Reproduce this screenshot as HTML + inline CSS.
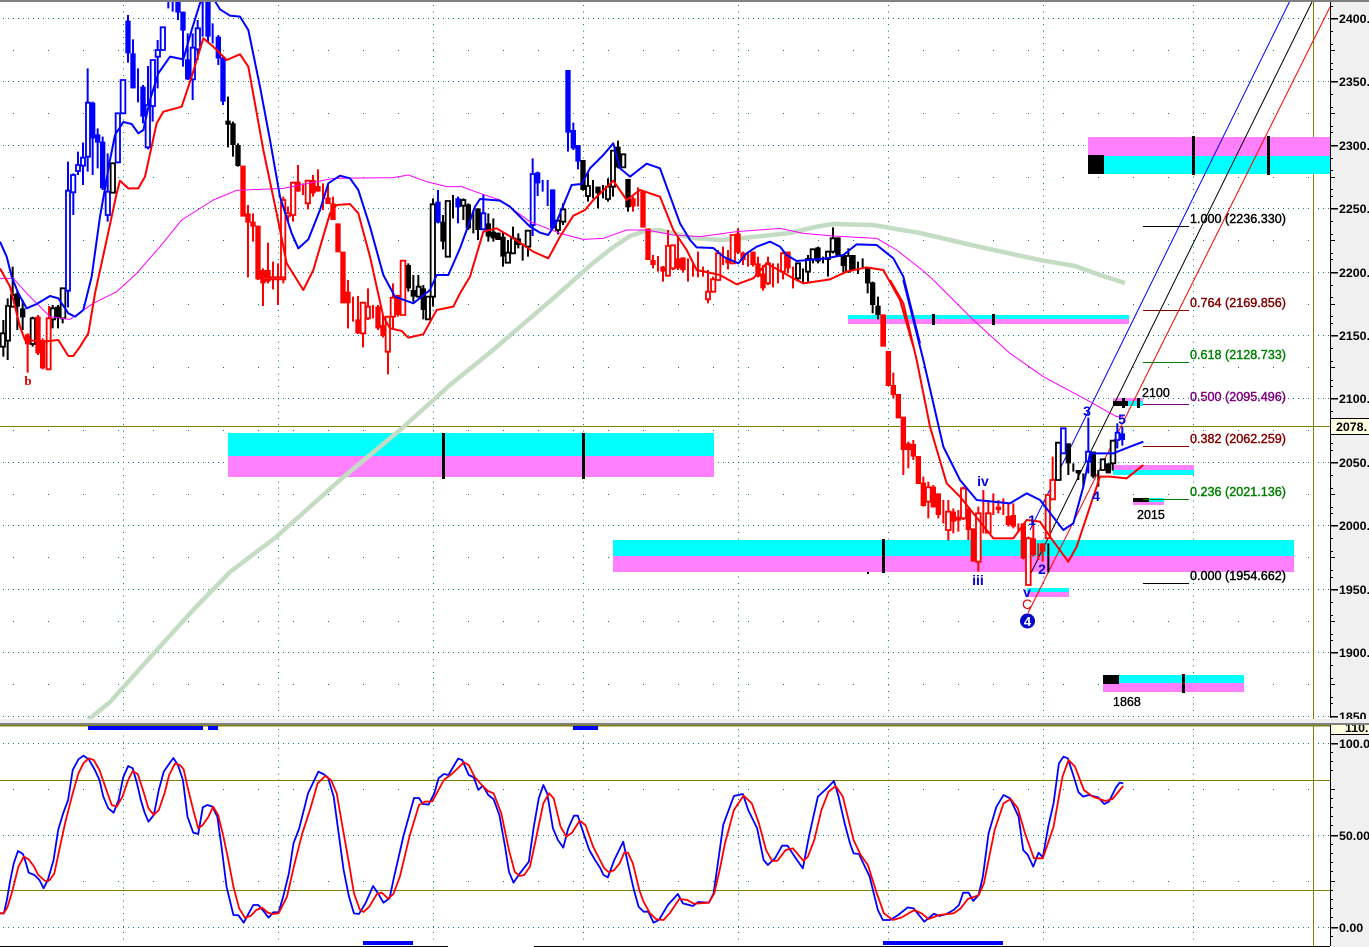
<!DOCTYPE html>
<html><head><meta charset="utf-8"><title>Chart</title>
<style>
html,body{margin:0;padding:0;background:#fff;width:1369px;height:947px;overflow:hidden}
svg{display:block;position:absolute;left:0;top:0}
text{font-family:"Liberation Sans",sans-serif}
.w{fill:none;stroke-width:6}
.f{fill:none;stroke-width:16}
.h{fill:#fff;stroke-width:5.5}
.ax{font-size:12.4px;font-weight:bold;fill:#000}
.fb{font-size:12.6px;stroke-width:.4}
.lb{font-size:12.5px;fill:#000;stroke:#000;stroke-width:.35}
.wv{font-size:14px;font-weight:bold;fill:#0000e0;text-anchor:middle}
</style></head><body>
<svg width="1369" height="947" viewBox="0 0 1369 947" xmlns="http://www.w3.org/2000/svg">
<rect width="1369" height="947" fill="#fff"/>
<!-- grid -->
<g stroke="#008080" stroke-width="1" fill="none" shape-rendering="crispEdges">
<g stroke-dasharray="1 4">
<path d="M3 18.5H1330M3 81.5H1330M3 145.5H1330M3 208.5H1330M3 272.5H1330M3 335.5H1330M3 398.5H1330M3 462.5H1330M3 525.5H1330M3 589.5H1330M3 652.5H1330M3 716.5H1330M3 743.5H1330M3 835.5H1330M3 927.5H1330"/>
</g>
<g stroke-dasharray="1 34">
<path d="M13 50.5H1330M13 113.5H1330M13 177.5H1330M13 240.5H1330M13 304.5H1330M13 367.5H1330M13 430.5H1330M13 494.5H1330M13 557.5H1330M13 621.5H1330M13 684.5H1330M13 789.5H1330M13 881.5H1330"/>
</g>
<g stroke-dasharray="1 5.35">
<path d="M123.5 5V945M278.5 5V945M433.5 5V945M583.5 5V945M738.5 5V945M888.5 5V945M1043.5 5V945M1193.5 5V945"/>
</g>
</g>
<!-- olive lines -->
<g stroke="#808000" stroke-width="1" shape-rendering="crispEdges">
<path d="M0 426.5H1330M1313.5 0V946M0 780.5H1330M0 890.5H1330"/>
<path d="M0 725.5H1330" stroke-width="2"/>
</g>
<!-- bands -->
<g shape-rendering="crispEdges">
<rect x="1088" y="137" width="242" height="19" fill="#ff80ff"/><rect x="1088" y="156" width="242" height="18" fill="#00ffff"/><rect x="1088" y="155" width="16" height="19" fill="#000"/>
<rect x="1192" y="136" width="3" height="39" fill="#000"/><rect x="1267" y="136" width="3" height="39" fill="#000"/>
<rect x="848" y="315" width="281" height="4" fill="#00ffff"/><rect x="848" y="319" width="281" height="5" fill="#ff80ff"/>
<rect x="932" y="314" width="3" height="11" fill="#000"/><rect x="992" y="314" width="3" height="11" fill="#000"/>
<rect x="228" y="433" width="486" height="23" fill="#00ffff"/><rect x="228" y="456" width="486" height="21" fill="#ff80ff"/>
<rect x="442" y="433" width="3" height="46" fill="#000"/><rect x="582" y="433" width="3" height="46" fill="#000"/>
<rect x="613" y="540" width="681" height="16" fill="#00ffff"/><rect x="613" y="556" width="681" height="16" fill="#ff80ff"/>
<rect x="882" y="539" width="3" height="34" fill="#000"/><rect x="867" y="572" width="2" height="2" fill="#000"/>
<rect x="1027" y="588" width="42" height="4" fill="#00ffff"/><rect x="1027" y="592" width="42" height="5" fill="#ff80ff"/>
<rect x="1113" y="398" width="30" height="3" fill="#ff80ff"/><rect x="1113" y="401" width="30" height="5" fill="#00ffff"/><rect x="1113" y="401" width="15" height="5" fill="#000"/>
<rect x="1122" y="398" width="3" height="10" fill="#000"/><rect x="1137" y="398" width="3" height="10" fill="#000"/>
<rect x="1113" y="465" width="81" height="5" fill="#ff80ff"/><rect x="1113" y="470" width="81" height="5" fill="#00ffff"/>
<rect x="1133" y="498" width="31" height="4" fill="#00ffff"/><rect x="1133" y="502" width="31" height="3" fill="#ff80ff"/><rect x="1133" y="498" width="16" height="4" fill="#000"/>
<rect x="1103" y="675" width="141" height="8" fill="#00ffff"/><rect x="1103" y="683" width="141" height="9" fill="#ff80ff"/><rect x="1103" y="675" width="16" height="9" fill="#000"/>
<rect x="1182" y="674" width="3" height="19" fill="#000"/>
</g>
<!-- thick green MA -->
<path d="M88 720L110 702L155 652L195 608L230 572L275 538L340 480L400 430L450 385L493 350L557 295L593 263L612 248L630 236L645 231L660 230L693 238L720 240L743 238L790 233L815 227L833 224L873 225L920 233L980 247L1040 260L1075 266L1100 275L1125 283" fill="none" stroke="#c3dcc3" stroke-width="4.5" stroke-linejoin="round"/>
<!-- channel lines -->
<g fill="none" stroke-width="1">
<path d="M1310 -40L1030 530" stroke="#0000ff"/>
<path d="M1312 2L1030 575" stroke="#000"/>
<path d="M1330 7L1028 613" stroke="#ff0000"/>
</g>
<!-- candles: zoom1 -->
<g transform="scale(.33333)">
<g stroke="#000">
<path class="w" d="M10 960V1070M23 895V1080M38 800V920M52 870V990M68 900V990M98 950V1040M158 915V985M174 915V985M188 865V970M684 290V442M699 365V470M714 430V500M1225 790V875M1240 825V905M1255 825V890M1270 855V958M1299 595V920M1329 645V748M1359 585V655"/>
<path class="f" d="M52 880V920M68 925V952M174 920V955M684 362V374M699 370V435M714 435V498M1225 795V865M1240 870V890M1270 865V930M1329 665V725"/>
<path class="h" d="M2 1000H15V1040H2ZM18 918H30V1022H18ZM33 885H45V920H33ZM92 955H105V1032H92ZM152 925H165V958H152ZM182 865H196V955H182ZM1250 860H1262V890H1250ZM1278 890H1290V958H1278ZM1292 613H1305V890H1292ZM1337 603H1350V770H1337Z"/>
</g>
<g stroke="#ff0000">
<path class="w" d="M83 1000V1118M114 945V1065M128 1015V1108M147 918V1110M744 615V832M759 640V725M774 677V840M789 805V918M804 728V850M819 785V868M834 790V915M850 590V850M864 620V665M879 545V665M894 495V575M909 550V585M924 540V628M939 525V590M954 508V575M969 550V630M984 555V612M999 590V660M1044 840V985M1059 890V965M1074 888V1002M1089 908V1042M1104 865V960M1119 915V955M1134 915V990M1149 945V1012M1164 950V1123M1179 850V985M1194 885V950"/>
<path class="f" d="M83 1003V1033M114 950V1060M128 1020V1105M729 497V650M744 640V668M759 665V680M774 677V838M789 810V850M804 810V845M894 545V575M939 540V580M954 558V575M984 592V612M999 610V660M1014 670V757M1029 755V910M1044 875V910M1074 958V1000M1134 920V985M1149 975V1008M1194 885V945"/>
<path class="h" d="M140 955H152V1108H140ZM785 832H856V838H785ZM843 600H856V832H843ZM858 640H870V648H858ZM873 548H886V645H873ZM917 542H930V610H917ZM1082 908H1096V1000H1082ZM1098 920H1110V955H1098ZM1157 950H1170V1055H1157ZM1172 893H1185V950H1172ZM1202 782H1216V945H1202Z"/>
</g>
<g stroke="#0000ff">
<path class="w" d="M204 485V922M220 520V645M234 455V525M249 428V555M263 205V515M278 305V525M293 385V505M308 410V570M323 460V665M352 340V490M384 45V188M399 118V265M414 205V307M429 255V370M444 198V448M458 180V365M473 120V265M505 0V25M518 0V35M534 0V60M549 35V200M563 100V240M578 100V300M593 60V180M608 0V110M624 0V125M638 70V130M655 105V195M669 170V315M1314 570V670M1374 590V670"/>
<path class="f" d="M278 308V415M293 403V428M308 425V565M384 62V160M399 160V265M429 260V350M534 5V38M549 35V92M563 178V238M624 5V110M655 110V175M669 172V305M1314 605V668M1374 595V622"/>
<path class="h" d="M198 572H210V872H198ZM213 525H226V577H213ZM228 495H240V513H228ZM243 473H255V497H243ZM258 308H270V470H258ZM317 575H330V645H317ZM347 340H360V487H347ZM362 240H376V340H362ZM437 315H450V442H437ZM452 180H465V318H452ZM467 150H480V170H467ZM482 82H495V150H482ZM572 143H585V238H572ZM587 85H600V148H587Z"/>
</g>
<path class="h" stroke="#000" d="M332 490H345V578H332Z"/>
</g>
<!-- candles: zoom2 -->
<g transform="translate(460,50) scale(.33333)">
<g stroke="#000">
<path class="w" d="M10 445V510M25 460V540M40 480V550M54 475V570M85 490V575M100 505V575M114 548V570M129 545V650M144 570V640M159 530V610M175 550V595M188 580V632M204 540V620M294 510V553M309 460V525M369 330V422M384 365V455M399 390V445M414 410V475M429 405V445M444 385V455M459 300V440M474 272V355M504 387V485M1014 640V695M1029 655V700M1044 615V695M1059 595V640M1074 590V640M1089 620V640M1104 602V680M1119 532V610M1134 562V620M1150 612V668M1165 595V668M1179 615V660M1194 635V672M1208 625V655M1223 655V730M1238 695V790M1254 740V808"/>
<path class="f" d="M25 463V535M54 475V540M85 520V560M100 545V565M114 548V570M129 560V620M175 565V585M369 330V420M414 410V430M474 290V352M504 387V472M1074 592V635M1134 562V620M1150 615V648M1179 615V660M1223 655V700M1238 697V765M1254 767V795"/>
<path class="h" d="M4 450H16V467H4ZM137 608H150V638H137ZM153 565H165V610H153ZM197 542H211V590H197ZM288 512H300V540H288ZM302 478H316V515H302ZM378 408H390V438H378ZM438 410H450V447H438ZM453 302H465V410H453ZM484 313H496V352H484ZM1008 640H1020V685H1008ZM1038 627H1050V665H1038ZM1052 598H1065V628H1052ZM1098 605H1110V627H1098ZM1112 565H1125V605H1112ZM1158 618H1170V665H1158Z"/>
</g>
<g stroke="#0000ff">
<path class="w" d="M70 432V540M218 325V558M233 365V438M248 390V425M263 390V468M278 418V537M324 60V305M340 218V300M354 285V358"/>
<path class="f" d="M233 367V400M278 418V535M324 60V248M340 240V295M354 285V335"/>
<path class="h" d="M64 490H76V538H64ZM212 372H224V525H212Z"/>
</g>
<g stroke="#ff0000">
<path class="w" d="M519 440V485M534 412V470M579 615V655M594 618V665M609 648V695M624 540V680M639 585V660M654 560V660M669 622V668M684 625V695M699 640V680M714 605V682M729 650V680M744 660V760M759 680V728M774 600V692M789 590V645M804 600V658M834 535V612M849 605V645M864 610V650M879 605V650M894 620V682M909 645V722M924 620V705M939 640V712M954 640V700M969 605V688M984 605V670M999 650V715"/>
<path class="f" d="M519 445V470M549 425V533M564 535V630M579 630V645M609 650V665M654 625V655M669 622V660M804 625V640M834 550V608M849 608V630M879 605V645M894 640V680M909 670V715M984 605V655M1269 793V890"/>
<path class="h" d="M618 588H630V677H618ZM632 586H645V655H632ZM738 725H750V748H738ZM753 688H766V725H753ZM768 610H781V690H768ZM812 555H825V640H812ZM918 640H930V700H918ZM963 610H975V665H963Z"/>
</g>
</g>
<!-- candles: zoom3 -->
<g transform="translate(860,280) scale(.33333)">
<g stroke="#ff0000">
<path class="w" d="M100 278V355M130 508V585M145 485V565M160 480V540M190 590V680M205 605V715M220 615V683M235 640V715M250 660V730M265 660V782M280 685V760M295 690V755M310 620V720M325 685V780M355 680V875M370 630V760M385 660V760M400 640V705M415 660V700M430 655V705M445 670V740M460 670V745M475 730V755M490 730V838M505 770V915M520 735V830M535 790V840M548 790V845M578 530V660"/>
<path class="f" d="M70 105V200M85 213V318M100 315V345M115 342V415M130 410V510M145 490V510M160 492V530M175 528V612M190 608V678M220 620V682M235 640V705M280 695V725M295 710V722M325 685V750M340 745V845M415 680V690M445 708V735M460 705V740M490 730V835M520 775V825M548 790V815"/>
<path class="h" d="M198 622H212V665H198ZM258 695H272V750H258ZM303 625H318V715H303ZM348 700H362V845H348ZM378 700H392V758H378ZM498 775H512V915H498ZM557 645H570V775H557ZM571 600H585V658H571Z"/>
</g>
<g stroke="#000">
<path class="w" d="M565 790V878M625 490V585M640 550V575M655 570V600M670 580V620M700 515V595M715 570V620M745 550V580M758 480V572"/>
<path class="f" d="M625 490V550M655 570V580M700 515V590M745 550V580"/>
<path class="h" d="M588 488H602V600H588ZM722 538H735V570H722ZM752 482H766V550H752Z"/>
</g>
<g stroke="#0000ff">
<path class="w" d="M685 413V580M772 430V505M787 440V497"/>
<path class="f" d="M787 460V480"/>
<path class="h" d="M603 445H617V520H603ZM678 515H692V545H678ZM767 458H778V480H767Z"/>
</g>
</g>
<!-- MA lines -->
<g fill="none" stroke-linejoin="round">
<g transform="scale(.33333)">
<path stroke="#ff00ff" stroke-width="3" d="M0 835L40 835L80 880L150 950L210 958L280 910L350 875L410 820L480 740L545 660L640 600L710 571L850 565L1000 535L1180 533L1225 525L1280 545L1340 560L1380 560"/>
<path stroke="#0000ff" stroke-width="6" d="M0 725L20 770L35 830L55 880L80 925L110 912L150 888L175 895L205 940L225 950L250 930L275 830L300 650L330 480L345 405L370 366L395 372L415 400L430 390L450 300L475 220L510 170L550 178L575 90L600 10L610 -10M640 -5L660 28L690 47L720 50L745 90L780 260L810 420L840 590L875 700L895 745L925 718L960 630L985 550L1020 527L1050 535L1075 570L1110 680L1150 825L1185 890L1240 910L1290 870L1310 825L1345 825L1380 745"/>
<path stroke="#ff0000" stroke-width="6" d="M0 805L30 860L60 980L75 1020L130 1025L175 1020L205 1068L220 1068L240 1040L265 1000L285 880L320 720L350 580L360 542L385 565L415 565L435 530L470 370L490 335L545 320L575 230L610 115L640 140L680 180L720 163L745 200L790 450L830 640L860 790L910 870L940 810L990 640L1010 615L1050 612L1075 640L1110 770L1150 950L1170 985L1205 993L1225 1013L1270 1003L1310 930L1360 920L1380 880"/>
</g>
<g transform="translate(460,50) scale(.33333)">
<path stroke="#ff00ff" stroke-width="3" d="M0 408L60 430L120 450L210 515L300 550L370 568L430 565L500 540L560 540L640 555L720 560L830 545L960 535L1030 550L1120 558L1250 565L1310 600L1380 655"/>
<path stroke="#0000ff" stroke-width="6" d="M0 595L20 540L45 470L60 447L120 452L150 470L210 530L240 548L265 555L290 515L335 405L365 402L390 355L430 315L460 280L480 355L510 380L560 341L600 355L620 410L660 520L690 570L710 592L760 594L790 620L835 640L860 610L890 590L930 575L960 590L980 615L1010 633L1100 625L1150 615L1190 583L1250 585L1300 625L1330 680L1360 800L1380 880"/>
<path stroke="#ff0000" stroke-width="6" d="M0 730L30 680L70 545L110 535L160 565L220 605L265 625L300 560L340 497L375 480L400 450L460 392L500 450L540 420L600 440L640 540L680 600L710 660L780 675L830 703L880 685L920 640L1000 685L1030 700L1110 688L1160 665L1220 652L1270 660L1320 750L1360 890"/>
</g>
<g transform="translate(860,280) scale(.33333)">
<path stroke="#ff00ff" stroke-width="3" d="M180 -36L220 0L340 120L450 220L550 290L690 365L770 410L790 410"/>
<path stroke="#0000ff" stroke-width="6" d="M130 0L190 240L250 500L300 600L350 660L450 670L500 640L540 660L610 750L640 730L670 620L690 520L760 520L810 500L850 485"/>
<path stroke="#ff0000" stroke-width="6" d="M90 0L130 70L170 240L210 440L260 610L300 650L400 775L460 775L500 720L540 725L570 770L625 845L650 800L690 680L720 590L750 590L800 595L850 555"/>
</g>
</g>
<!-- fib lines -->
<g stroke-width="1" shape-rendering="crispEdges">
<path d="M1143 226.5H1189" stroke="#000"/>
<path d="M1143 310.5H1189" stroke="#800000"/>
<path d="M1143 362.5H1189" stroke="#008000"/>
<path d="M1143 404.5H1189" stroke="#800080"/>
<path d="M1143 446.5H1189" stroke="#800000"/>
<path d="M1143 499.5H1189" stroke="#008000"/>
<path d="M1143 583.5H1189" stroke="#000"/>
</g>
<!-- fib text -->
<g class="fb">
<text x="1190" y="223" class="fb" fill="#000" stroke="#000">1.000 (2236.330)</text>
<text x="1190" y="307" class="fb" fill="#800000" stroke="#800000">0.764 (2169.856)</text>
<text x="1190" y="359" class="fb" fill="#008000" stroke="#008000">0.618 (2128.733)</text>
<text x="1190" y="401" class="fb" fill="#800080" stroke="#800080">0.500 (2095.496)</text>
<text x="1190" y="443" class="fb" fill="#800000" stroke="#800000">0.382 (2062.259)</text>
<text x="1190" y="496" class="fb" fill="#008000" stroke="#008000">0.236 (2021.136)</text>
<text x="1190" y="580" class="fb" fill="#000" stroke="#000">0.000 (1954.662)</text>
</g>
<text x="1142" y="397" class="lb">2100</text>
<text x="1137" y="519" class="lb">2015</text>
<text x="1113" y="706" class="lb">1868</text>
<!-- wave labels -->
<text x="28" y="385" class="wv" style="fill:#e00000;font-size:13px;font-family:'Liberation Serif',serif">b</text>
<text x="978" y="585" class="wv">iii</text>
<text x="983" y="486" class="wv">iv</text>
<text x="1027" y="597" class="wv">v</text>
<text x="1027" y="609" class="wv" style="fill:#e00000;font-weight:normal">C</text>
<text x="1032" y="525" class="wv">1</text>
<text x="1042" y="574" class="wv">2</text>
<text x="1087" y="416" class="wv">3</text>
<text x="1096" y="501" class="wv">4</text>
<text x="1122" y="424" class="wv">5</text>
<circle cx="1027.5" cy="621" r="7.5" fill="#0000c8"/>
<text x="1027.5" y="626" class="wv" style="fill:#fff;font-size:13px">4</text>
<!-- stochastic -->
<g fill="none" stroke-linejoin="round">
<g transform="translate(0,700) scale(.38265,.33333)">
<path vector-effect="non-scaling-stroke" stroke="#0000ff" stroke-width="1.8" d="M0 640L10 640L18 600L27 540L36 490L47 453L60 462L68 490L75 518L90 525L103 540L114 565L125 540L140 480L152 390L165 340L178 300L190 210L205 178L218 167L232 178L248 210L260 240L270 290L283 325L297 338L310 300L322 232L335 198L347 205L358 250L368 300L378 338L388 365L402 345L415 270L428 215L440 195L453 174L465 195L478 240L490 350L505 398L518 402L530 322L542 315L555 320L568 350L580 450L592 560L610 645L623 646L637 668L650 640L662 615L675 615L690 635L702 653L714 637L728 637L740 590L755 520L767 430L782 385L805 280L832 215L845 222L857 232L872 290L885 400L898 510L912 590L925 640L938 642L955 610L975 558L988 580L1002 608L1018 595L1030 530L1055 405L1082 294L1095 294L1105 312L1120 314L1135 280L1146 235L1160 222L1172 225L1197 176L1208 180L1225 225L1238 232L1250 270L1262 257L1276 285L1290 298L1305 345L1320 440L1330 515L1342 548L1360 518L1382 485L1395 380L1408 295L1420 255L1430 280L1445 385L1458 420L1472 443L1485 385L1500 347L1510 347L1525 400L1540 450L1555 480L1568 503"/>
<path vector-effect="non-scaling-stroke" stroke="#ff0000" stroke-width="1.8" d="M0 640L10 640L20 620L33 570L48 500L62 470L75 478L88 498L100 525L118 543L130 540L142 520L155 450L170 370L190 280L205 220L218 190L232 175L245 180L260 210L275 260L292 315L305 320L320 290L335 240L347 213L360 222L375 275L388 325L402 345L415 330L430 280L442 225L457 191L470 195L480 208L490 260L505 330L518 385L530 375L545 350L557 320L570 345L582 400L595 470L610 560L625 625L640 653L655 648L670 630L685 623L700 638L712 642L728 640L750 590L770 490L790 400L810 330L830 250L850 228L865 240L880 280L895 380L912 490L925 580L940 628L950 636L965 620L985 582L998 578L1014 596L1028 582L1045 530L1070 410L1095 315L1110 305L1130 304L1160 240L1185 218L1212 187L1225 195L1240 230L1255 250L1275 273L1290 280L1310 340L1330 450L1345 515L1358 528L1370 525L1385 500L1400 420L1420 310L1435 280L1447 295L1465 380L1480 410L1495 398L1515 362L1530 375L1550 440L1568 480"/>
</g>
<g transform="translate(600,700) scale(.35714,.33333)">
<path vector-effect="non-scaling-stroke" stroke="#0000ff" stroke-width="1.8" d="M0 503L10 525L22 532L40 480L65 425L80 500L95 570L108 620L122 635L135 635L150 668L165 660L190 615L218 582L232 610L260 618L275 606L305 608L318 580L330 490L345 375L375 288L400 282L415 330L440 385L458 480L470 495L490 475L510 437L525 437L545 470L568 505L585 410L610 290L635 265L655 243L668 290L685 370L700 430L710 460L725 462L755 530L778 630L792 660L812 660L835 645L862 622L878 625L908 665L935 641L950 648L970 642L990 630L1005 615L1017 578L1032 578L1045 603L1060 585L1072 530L1088 400L1110 320L1130 285L1148 295L1172 350L1185 450L1198 465L1213 500L1228 458L1240 472L1255 380L1270 310L1285 190L1298 170L1310 175L1325 225L1340 277L1353 290L1368 285L1395 292L1412 312L1425 305L1445 262L1455 248L1465 250"/>
<path vector-effect="non-scaling-stroke" stroke="#ff0000" stroke-width="1.8" d="M0 480L12 505L25 517L40 510L55 490L68 458L78 458L92 490L110 570L122 605L140 640L158 658L178 660L195 640L222 597L245 600L262 611L305 608L320 580L335 510L350 430L375 330L402 287L425 310L445 370L465 450L482 483L497 482L520 450L540 445L570 483L582 470L600 420L620 330L640 275L660 258L680 290L710 420L730 465L750 495L775 580L795 640L820 660L845 652L880 630L900 640L920 657L950 645L990 640L1010 625L1030 597L1060 586L1075 550L1105 390L1130 310L1150 297L1170 325L1190 400L1215 475L1240 475L1270 380L1295 230L1312 180L1330 200L1355 270L1380 290L1415 303L1435 297L1465 258"/>
</g>
</g>
<!-- blue bars -->
<g fill="#0000ff" shape-rendering="crispEdges">
<rect x="88" y="726" width="115" height="4"/><rect x="208" y="726" width="10" height="4"/><rect x="573" y="726" width="25" height="4"/>
<rect x="363" y="941" width="50" height="4"/><rect x="883" y="941" width="120" height="4"/>
</g>
<!-- right axis panel -->
<rect x="1331" y="0" width="38" height="947" fill="#f0f0f0"/>
<g shape-rendering="crispEdges">
<rect x="1331" y="419" width="38" height="16" fill="#ffffe1"/>
<path d="M1331 418.5H1369M1331 434.5H1369" stroke="#000" stroke-width="1"/>
<rect x="1331" y="725" width="38" height="9" fill="#ffffe1"/>
<path d="M1331 734.5H1369" stroke="#000"/>
<path d="M1330.5 0V718M1330.5 725V946M0 946.5H448M534 946.5H1330" stroke="#000" stroke-width="1"/>
<path d="M1331 18.5h7M1331 81.5h7M1331 145.5h7M1331 208.5h7M1331 272.5h7M1331 335.5h7M1331 398.5h7M1331 462.5h7M1331 525.5h7M1331 589.5h7M1331 652.5h7M1331 716.5h7M1331 743.5h7M1331 835.5h7M1331 927.5h7" stroke="#000" stroke-width="1.5"/>
<path d="M1331 50.5h4M1331 113.5h4M1331 177.5h4M1331 240.5h4M1331 304.5h4M1331 367.5h4M1331 494.5h4M1331 557.5h4M1331 621.5h4M1331 684.5h4M1331 789.5h4M1331 881.5h4" stroke="#000"/>
<path d="M1332 6v1M1332 31v1M1332 44v1M1332 63v1M1332 69v1M1332 94v1M1332 107v1M1332 126v1M1332 132v1M1332 158v1M1332 170v1M1332 189v1M1332 196v1M1332 221v1M1332 234v1M1332 253v1M1332 259v1M1332 285v1M1332 297v1M1332 316v1M1332 323v1M1332 348v1M1332 361v1M1332 380v1M1332 386v1M1332 411v1M1332 443v1M1332 450v1M1332 475v1M1332 488v1M1332 507v1M1332 513v1M1332 538v1M1332 551v1M1332 570v1M1332 577v1M1332 602v1M1332 615v1M1332 634v1M1332 640v1M1332 665v1M1332 678v1M1332 697v1M1332 703v1M1332 752v1M1332 761v1M1332 770v1M1332 798v1M1332 807v1M1332 816v1M1332 825v1M1332 844v1M1332 853v1M1332 862v1M1332 871v1M1332 890v1M1332 899v1M1332 908v1M1332 917v1M1332 936v1" stroke="#000" stroke-width="2"/>
</g>
<g>
<text x="1339" y="23" class="ax">2400.</text>
<text x="1339" y="86" class="ax">2350.</text>
<text x="1339" y="150" class="ax">2300.</text>
<text x="1339" y="213" class="ax">2250.</text>
<text x="1339" y="277" class="ax">2200.</text>
<text x="1339" y="340" class="ax">2150.</text>
<text x="1339" y="403" class="ax">2100.</text>
<text x="1336" y="431" class="ax">2078.</text>
<text x="1339" y="467" class="ax">2050.</text>
<text x="1339" y="530" class="ax">2000.</text>
<text x="1339" y="594" class="ax">1950.</text>
<text x="1339" y="657" class="ax">1900.</text>
<text x="1339" y="721" class="ax">1850.</text>
<text x="1345" y="732" class="ax">110.</text>
<text x="1339" y="748" class="ax">100.0</text>
<text x="1339" y="840" class="ax">50.00</text>
<text x="1339" y="932" class="ax">0.00</text>
</g>
<!-- separator and top -->
<g shape-rendering="crispEdges">
<rect x="0" y="0" width="1369" height="2" fill="#808080"/>
<rect x="0" y="719" width="1369" height="4" fill="#eeeeee"/>
<rect x="0" y="723" width="1369" height="2" fill="#808080"/>
<path d="M0 725.5H1330" stroke="#808000" stroke-width="1"/>
</g>
</svg>
</body></html>
